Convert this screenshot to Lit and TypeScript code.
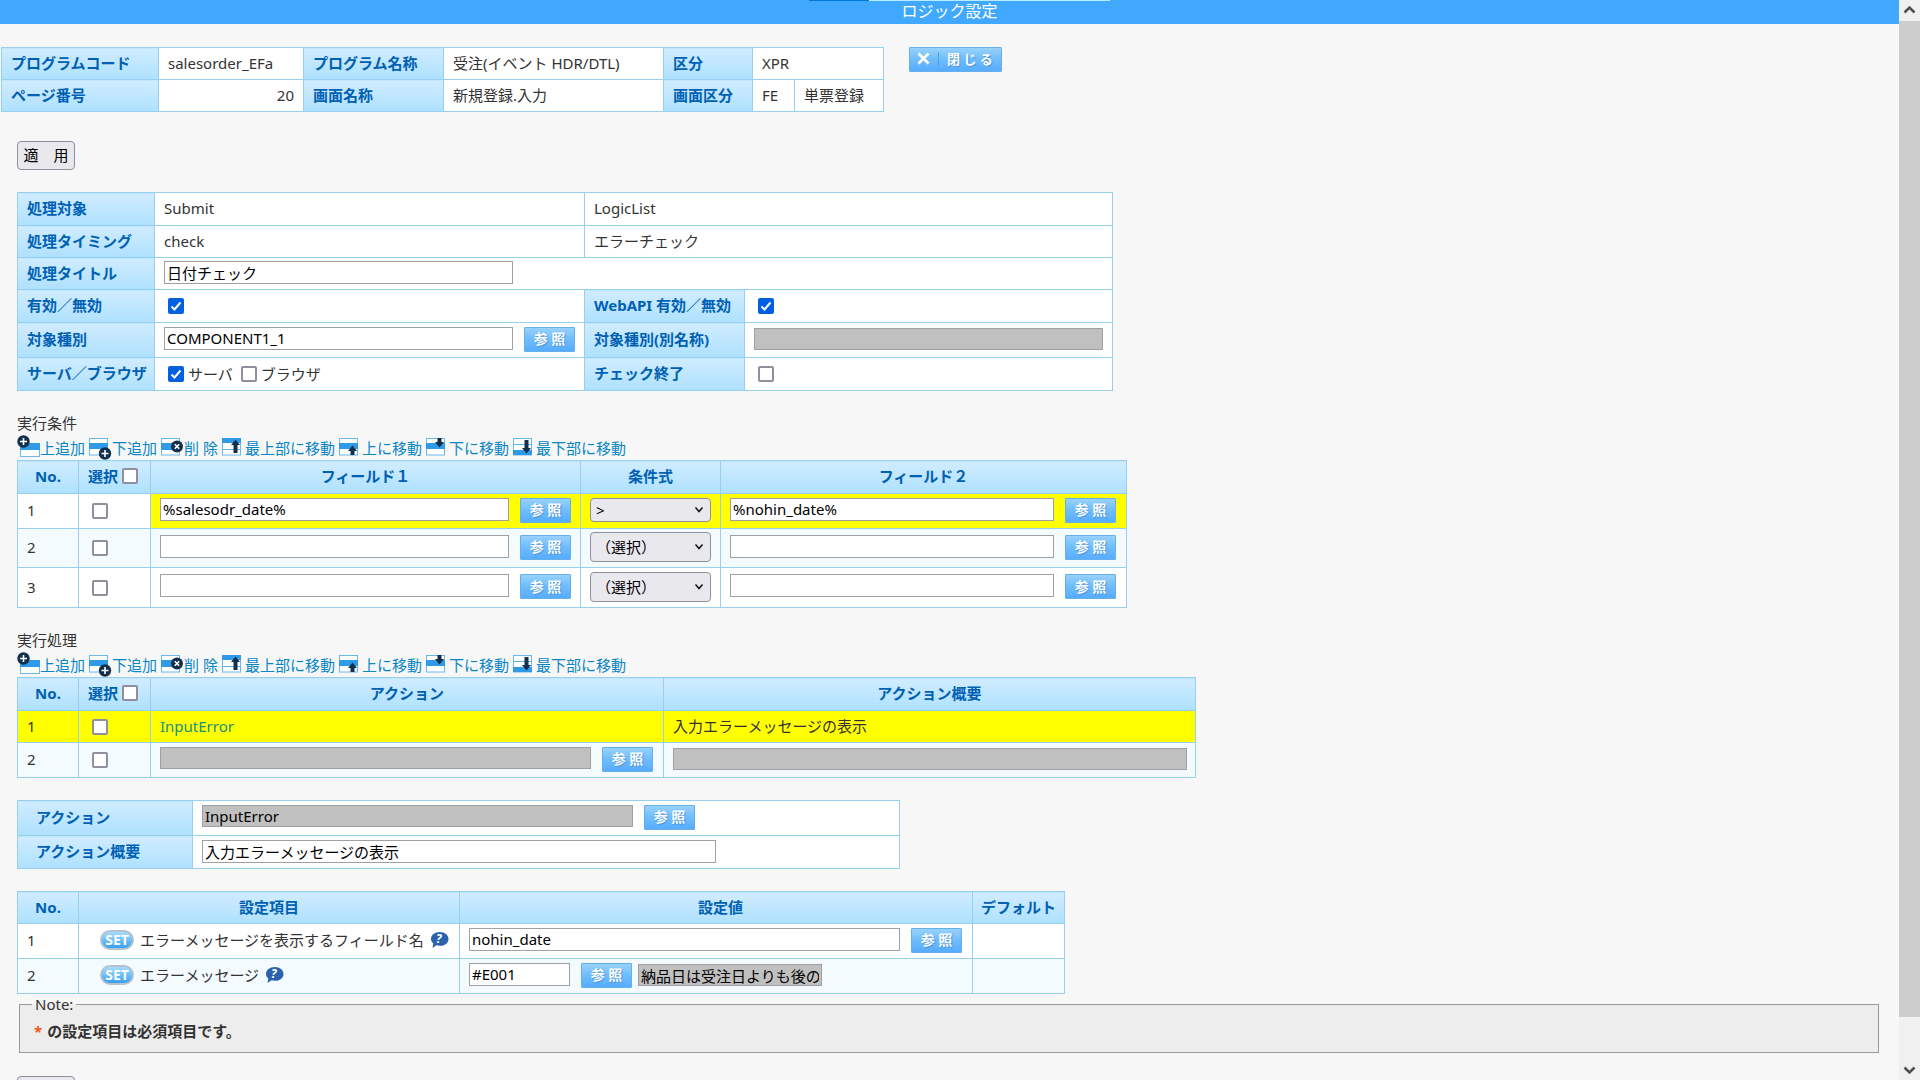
import { LitElement, html, svg, css } from "lit";
import { customElement } from "lit/decorators.js";

const arrowUp = (x: number, top: number, bottom: number) => svg`
  <path fill="#12304e" d="M${x} ${top}l4.5 5.5h-2.5V${bottom}h-4V${top + 5.5}h-2.5z" />`;
const arrowDown = (x: number, top: number, bottom: number) => svg`
  <path fill="#12304e" d="M${x} ${bottom}l4.5 -5.5h-2.5V${top}h-4V${bottom - 5.5}h-2.5z" />`;
const sheet = (bandTop: number, bandHeight: number) => svg`
  <rect x="0.5" y="3.5" width="18" height="16.5" fill="#fff" stroke="#6db8ea" />
  <rect x="0" y="${bandTop}" width="19" height="${bandHeight}" fill="#2f9be8" />`;

const tools = [
  {
    text: "上追加", gap: "tight", width: 23,
    icon: svg`
      <rect x="3.5" y="8.5" width="19" height="13" fill="#fff" stroke="#6db8ea" />
      <rect x="3" y="8" width="20" height="7" fill="#2f9be8" />
      <circle cx="6.5" cy="6.5" r="6.2" fill="#12304e" />
      <path d="M6.5 3v7M3 6.5h7" stroke="#fff" stroke-width="1.6" />`,
  },
  {
    text: "下追加", gap: "tight", width: 23,
    icon: svg`${sheet(8, 6)}
      <circle cx="16" cy="18.5" r="6.2" fill="#12304e" />
      <path d="M16 15v7M12.500 18.500h7" stroke="#fff" stroke-width="1.6" />`,
  },
  {
    text: "削 除", gap: "tight", width: 23,
    icon: svg`${sheet(8, 7)}
      <circle cx="16" cy="11.5" r="6" fill="#12304e" />
      <path d="M13.800 9.300l4.400 4.400M18.200 9.300l-4.400 4.400" stroke="#fff" stroke-width="1.6" />`,
  },
  {
    text: "最上部に移動", gap: "wide", width: 19,
    icon: svg`${sheet(3, 5)}<path d="M1 14.500h17" stroke="#5eb2ec" />${arrowUp(13.5, 4.5, 18)}`,
  },
  { text: "上に移動", gap: "wide", width: 19, icon: svg`${sheet(8, 6)}${arrowUp(13.5, 10.5, 20)}` },
  { text: "下に移動", gap: "wide", width: 19, icon: svg`${sheet(8, 6)}${arrowDown(13.5, 3, 12.5)}` },
  {
    text: "最下部に移動", gap: "wide", width: 19,
    icon: svg`${sheet(15, 5)}<path d="M1 9.500h17" stroke="#5eb2ec" />${arrowDown(13.5, 5, 18.5)}`,
  },
];

const conditions = [
  { no: 1, left: "%salesodr_date%", op: ">", right: "%nohin_date%" },
  { no: 2, left: "", op: "（選択）", right: "" },
  { no: 3, left: "", op: "（選択）", right: "" },
];

@customElement("app-root")
export class AppRoot extends LitElement {
  static styles = css`
    :host {
      display: flex;
      height: 100vh;
      overflow: hidden;
      background: #f7f7f7;
      color: #333;
      font: 15px/20px "Noto Sans", "Noto Sans CJK JP", sans-serif;
    }
    * { box-sizing: border-box; }
    .page { flex: 1; min-width: 0; overflow: hidden; }
    .progress { display: grid; grid-template-columns: 60px 241px; height: 1px; padding-left: 809px; }
    .progress-done { background: #0078d7; }
    .progress-rest { background: #b8ecfc; }
    .title { height: 24px; background: #40a9ff; color: #fff; }
    .title h1 { margin: 0; font-size: 16px; font-weight: 400; line-height: 21px; text-align: center; }
    .summary { display: flex; align-items: flex-start; gap: 25px; padding: 23px 0 29px 1px; }
    .body { padding: 0 19px 0 17px; }
    .block { margin-top: 22px; }

    table { border-collapse: collapse; table-layout: fixed; background: #fff; }
    th, td { border: 1px solid #99cfee; padding: 0 9px 2px; text-align: left; font-weight: 400; }
    th { background: linear-gradient(#d0ecff, #aee1ff); color: #0060b4; font-weight: 700; white-space: nowrap; padding-right: 0; }
    thead th { text-align: center; padding: 0 0 2px; }
    th.indent { padding-left: 18px; }
    th.pick { padding: 0 9px 2px; text-align: left; }
    th.value { padding-left: 9px; }
    td.num { text-align: right; }
    td.check { padding-left: 13px; padding-bottom: 0; }
    td.row-check { padding-left: 13px; padding-bottom: 0; }
    td.item { padding: 0 4px 2px 21px; }
    tr.alt { background: #f4fbff; }
    .lit { background: #ff0; }
    .h32 { height: 32px; }
    .h33 { height: 33px; }
    .h35 { height: 35px; }
    .h39 { height: 39px; }
    .h40 { height: 40px; }

    .t-head { width: 883px; }
    .t-target { width: 1096px; }
    .t-cond { width: 1110px; }
    .t-action { width: 1179px; }
    .t-detail { width: 883px; }
    .t-set { width: 1048px; }
    .w42 { width: 42px; }
    .w61 { width: 61px; }
    .w72 { width: 72px; }
    .w88 { width: 89px; }
    .w137 { width: 137px; }
    .w140 { width: 140px; }
    .w145 { width: 145px; }
    .w157 { width: 157px; }
    .w160 { width: 160px; }
    .w175 { width: 175px; }
    .w220 { width: 220px; }
    .w381 { width: 381px; }
    .w430 { width: 430px; }
    .w513 { width: 513px; }

    .line { display: flex; align-items: flex-start; gap: 11px; }
    .line.middle { align-items: center; gap: 6px; }
    .checks { display: flex; align-items: center; gap: 8px; }
    .checks label, .pick-line { display: flex; align-items: center; gap: 4px; }

    input, select, button { font: inherit; margin: 0; }
    .text { display: block; height: 23px; padding: 0 2px; border: 1px solid #a0a0a4; background: #fff; color: #000; line-height: 20px; min-width: 0; }
    .text.off { background: #c0c0c0; height: 22px; }
    .s { width: 101px; }
    .m { width: 184px; }
    .f { width: 324px; }
    .l { width: 349px; }
    .xl { width: 431px; }
    .xxl { width: 514px; }
    .box {
      appearance: none; display: block; flex: none; width: 16px; height: 16px;
      border: 2px solid #8f8f9d; border-radius: 2px; background: #fff;
    }
    .box:checked {
      border-color: #0060df;
      background: #0060df url("data:image/svg+xml,%3Csvg xmlns='http://www.w3.org/2000/svg' viewBox='0 0 12 12'%3E%3Cpath d='M1.500 6.500l3 3 6-7' fill='none' stroke='white' stroke-width='2'/%3E%3C/svg%3E");
    }
    .ref, .close {
      flex: none; height: 25px; padding: 0; border: 1px solid #66b0ea; border-radius: 1px;
      background: linear-gradient(#98d2fc, #72befb 45%, #56acfd);
      color: #fff; font-weight: 700; line-height: 20px; text-shadow: 1px 1px 1px #4a94d8;
    }
    .ref { width: 51px; font-size: 14px; }
    .close { display: flex; align-items: center; width: 93px; font-size: 13px; padding: 0 0 2px 7px; }
    .close svg { flex: none; margin-right: 7px; }
    .apply { display: block; width: 58px; height: 29px; padding: 0 0 2px; border: 1px solid #8f8f9d; border-radius: 4px; background: #e9e9ed; color: #000; }
    .drop { display: grid; align-items: center; }
    .drop > * { grid-area: 1 / 1; }
    .drop svg { justify-self: end; margin-right: 7px; pointer-events: none; }
    .drop select { appearance: none; width: 100%; height: 30px; padding: 0 5px; border: 1px solid #8f8f9d; border-radius: 4px; background: #e9e9ed; color: #000; }
    .drop.short select { height: 24px; }

    h2 { margin: 20px 0 0; font-size: 15px; font-weight: 400; line-height: 24px; }
    .tools { display: flex; gap: 4px; height: 25px; }
    .tools a { display: flex; line-height: 26px; white-space: nowrap; }
    .tools a.wide { gap: 4px; }
    .tools svg { display: block; flex: none; }
    a { color: #0a86c4; text-decoration: none; }
    .lit a { color: #1a9080; }

    .set { flex: none; width: 34px; height: 20px; padding: 0; border: 2px solid #b4c2cc; border-radius: 10px; background: linear-gradient(#a6dcff, #36a0f2); color: #fff; font-size: 14px; font-weight: 700; line-height: 16px; }
    .help { flex: none; padding: 0; border: 0; background: none; height: 20px; }
    .help svg { display: block; }
    .help text { font: italic 700 12px "Noto Sans", sans-serif; fill: #fff; }

    fieldset { margin: 0 1px 23px 2px; padding: 7px 14px 11px; border: 1px solid #98989e; background: #ededed; font-weight: 700; min-width: 0; }
    legend { padding: 0 3px; margin-left: -2px; font-weight: 400; }
    .star { color: #f0581c; margin-right: 5px; }

    .scroll { display: flex; flex-direction: column; width: 21px; background: #f0f0f0; }
    .scroll svg { display: block; flex: none; }
    .track { flex: 1; display: grid; grid-template-rows: 96% 4%; }
    .thumb { background: #cdcdcd; }
  `;

  private ref = (label: string) => html`<button class="ref" type="button" aria-label="${label} 参照">参 照</button>`;

  private toolbar = () => html`
    <nav class="tools">
      ${tools.map((t) => html`<a class="${t.gap}" href="#"><svg width="${t.width}" height="25" viewBox="0 0 ${t.width} 25" aria-hidden="true">${t.icon}</svg>${t.text}</a>`)}
    </nav>`;

  private pick = (id: string) => html`
    <div class="pick-line"><label for="${id}">選択</label><input class="box" type="checkbox" id="${id}" /></div>`;

  private help = () => html`
    <button class="help" type="button" aria-label="ヘルプ">
      <svg width="19" height="20" viewBox="0 0 19 20">
        <path fill="#2a62ab" d="M9.800 2c5 0 8.700 2.900 8.700 6.900s-3.700 6.900-8.700 6.900c-1.200 0-2.300-.2-3.300-.5L2.500 18l.8-4.600C1.900 12.200 1 10.700 1 8.900 1 4.900 4.800 2 9.800 2z" />
        <text x="6" y="13">?</text>
      </svg>
    </button>`;

  render() {
    return html`
      <div class="page">
        <header class="title">
          <div class="progress"><i class="progress-done"></i><i class="progress-rest"></i></div>
          <h1>ロジック設定</h1>
        </header>

        <div class="summary">
          <table class="t-head">
            <colgroup><col class="w157" /><col class="w145" /><col class="w140" /><col class="w220" /><col class="w88" /><col class="w42" /><col /></colgroup>
            <tbody>
              <tr class="h32">
                <th>プログラムコード</th><td>salesorder_EFa</td>
                <th>プログラム名称</th><td>受注(イベント HDR/DTL)</td>
                <th>区分</th><td colspan="2">XPR</td>
              </tr>
              <tr class="h32">
                <th>ページ番号</th><td class="num">20</td>
                <th>画面名称</th><td>新規登録.入力</td>
                <th>画面区分</th><td>FE</td><td>単票登録</td>
              </tr>
            </tbody>
          </table>
          <button class="close" type="button">
            <svg width="23" height="16" viewBox="0 0 23 16" aria-hidden="true">
              <path d="M1.500 2.500l10 10M11.500 2.500l-10 10" stroke="#fff" stroke-width="2.600" />
              <path d="M21.500 1v14" stroke="#4f9fe0" />
            </svg>閉 じ る
          </button>
        </div>

        <main class="body">
          <button class="apply" type="button">適　用</button>

          <table class="t-target block">
            <colgroup><col class="w137" /><col class="w430" /><col class="w160" /><col /></colgroup>
            <tbody>
              <tr class="h33"><th>処理対象</th><td>Submit</td><td colspan="2">LogicList</td></tr>
              <tr class="h32"><th>処理タイミング</th><td>check</td><td colspan="2">エラーチェック</td></tr>
              <tr class="h32">
                <th><label for="title">処理タイトル</label></th>
                <td colspan="3"><input class="text l" id="title" value="日付チェック" /></td>
              </tr>
              <tr class="h33">
                <th><label for="valid">有効／無効</label></th>
                <td class="check"><input class="box" type="checkbox" id="valid" checked /></td>
                <th><label for="api">WebAPI 有効／無効</label></th>
                <td class="check"><input class="box" type="checkbox" id="api" checked /></td>
              </tr>
              <tr class="h35">
                <th><label for="kind">対象種別</label></th>
                <td><div class="line"><input class="text l" id="kind" value="COMPONENT1_1" />${this.ref("対象種別")}</div></td>
                <th><label for="alias">対象種別(別名称)</label></th>
                <td><input class="text off l" id="alias" readonly /></td>
              </tr>
              <tr class="h33">
                <th>サーバ／ブラウザ</th>
                <td class="check">
                  <div class="checks">
                    <label><input class="box" type="checkbox" checked />サーバ</label>
                    <label><input class="box" type="checkbox" />ブラウザ</label>
                  </div>
                </td>
                <th><label for="end">チェック終了</label></th>
                <td class="check"><input class="box" type="checkbox" id="end" /></td>
              </tr>
            </tbody>
          </table>

          <h2>実行条件</h2>
          ${this.toolbar()}
          <table class="t-cond">
            <colgroup><col class="w61" /><col class="w72" /><col class="w430" /><col class="w140" /><col /></colgroup>
            <thead>
              <tr class="h33"><th>No.</th><th class="pick">${this.pick("all-cond")}</th><th>フィールド１</th><th>条件式</th><th>フィールド２</th></tr>
            </thead>
            <tbody>
              ${conditions.map((c, i) => {
                const cell = i === 0 ? "lit" : "";
                return html`
                  <tr class="${["h35", "alt h39", "h40"][i]}">
                    <td>${c.no}</td>
                    <td class="row-check"><input class="box" type="checkbox" aria-label="選択 ${c.no}" /></td>
                    <td class="${cell}"><div class="line"><input class="text l" aria-label="フィールド１" .value=${c.left} />${this.ref("フィールド１")}</div></td>
                    <td class="${cell}">
                      <div class="drop ${i === 0 ? "short" : ""}">
                        <select aria-label="条件式"><option>${c.op}</option></select>
                        <svg width="10" height="8" viewBox="0 0 10 8" aria-hidden="true"><path d="M1.500 1.500L5 5.500l3.500-4" fill="none" stroke="#111" stroke-width="1.500" /></svg>
                      </div>
                    </td>
                    <td class="${cell}"><div class="line"><input class="text f" aria-label="フィールド２" .value=${c.right} />${this.ref("フィールド２")}</div></td>
                  </tr>`;
              })}
            </tbody>
          </table>

          <h2>実行処理</h2>
          ${this.toolbar()}
          <table class="t-action">
            <colgroup><col class="w61" /><col class="w72" /><col class="w513" /><col /></colgroup>
            <thead>
              <tr class="h33"><th>No.</th><th class="pick">${this.pick("all-act")}</th><th>アクション</th><th>アクション概要</th></tr>
            </thead>
            <tbody>
              <tr class="h32 lit">
                <td>1</td><td class="row-check"><input class="box" type="checkbox" aria-label="選択 1" /></td>
                <td><a href="#">InputError</a></td><td>入力エラーメッセージの表示</td>
              </tr>
              <tr class="h35 alt">
                <td>2</td><td class="row-check"><input class="box" type="checkbox" aria-label="選択 2" /></td>
                <td><div class="line"><input class="text off xl" aria-label="アクション" readonly />${this.ref("アクション")}</div></td>
                <td><input class="text off xxl" aria-label="アクション概要" readonly /></td>
              </tr>
            </tbody>
          </table>

          <table class="t-detail block">
            <colgroup><col class="w175" /><col /></colgroup>
            <tbody>
              <tr class="h35">
                <th class="indent"><label for="act">アクション</label></th>
                <td><div class="line"><input class="text off xl" id="act" readonly value="InputError" />${this.ref("アクション")}</div></td>
              </tr>
              <tr class="h33">
                <th class="indent"><label for="desc">アクション概要</label></th>
                <td><input class="text xxl" id="desc" value="入力エラーメッセージの表示" /></td>
              </tr>
            </tbody>
          </table>

          <table class="t-set block">
            <colgroup><col class="w61" /><col class="w381" /><col class="w513" /><col /></colgroup>
            <thead><tr class="h32"><th>No.</th><th>設定項目</th><th class="value">設定値</th><th>デフォルト</th></tr></thead>
            <tbody>
              <tr class="h35">
                <td>1</td>
                <td class="item"><div class="line middle"><button class="set" type="button">SET</button><label for="fld">エラーメッセージを表示するフィールド名</label>${this.help()}</div></td>
                <td><div class="line"><input class="text xl" id="fld" value="nohin_date" />${this.ref("フィールド名")}</div></td>
                <td></td>
              </tr>
              <tr class="h35 alt">
                <td>2</td>
                <td class="item"><div class="line middle"><button class="set" type="button">SET</button><label for="msg">エラーメッセージ</label>${this.help()}</div></td>
                <td>
                  <div class="line">
                    <input class="text s" id="msg" value="#E001" />
                    <div class="line middle">${this.ref("エラーメッセージ")}<input class="text off m" aria-label="メッセージ内容" readonly value="納品日は受注日よりも後の" /></div>
                  </div>
                </td>
                <td></td>
              </tr>
            </tbody>
          </table>

          <fieldset>
            <legend>Note:</legend>
            <span class="star">*</span>の設定項目は必須項目です。
          </fieldset>
          <button class="apply" type="button">適　用</button>
        </main>
      </div>

      <div class="scroll" aria-hidden="true">
        <svg width="21" height="21" viewBox="0 0 21 21"><path d="M5.500 12.500l5-5 5 5" fill="none" stroke="#505050" stroke-width="2.500" /></svg>
        <div class="track"><div class="thumb"></div></div>
        <svg width="21" height="21" viewBox="0 0 21 21"><path d="M5.500 8.500l5 5 5-5" fill="none" stroke="#505050" stroke-width="2.500" /></svg>
      </div>
    `;
  }
}
